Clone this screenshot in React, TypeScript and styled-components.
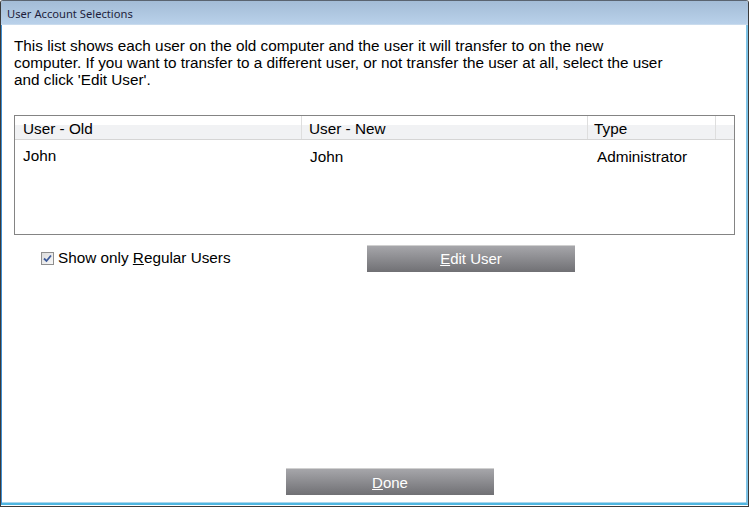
import React from "react";
import styled, { createGlobalStyle } from "styled-components";

const Global = createGlobalStyle`
  html, body { margin: 0; padding: 0; background: #ffffff; }
  * { box-sizing: border-box; }
`;

const Window = styled.div`
  width: 749px;
  height: 507px;
  display: flex;
  flex-direction: column;
  border: 1px solid #3a3a3a;
  border-top-color: #5a6470;
  border-radius: 3px 3px 0 0;
  background: #ffffff;
  overflow: hidden;
  font-family: "Liberation Sans", Arial, sans-serif;
`;

const TitleBar = styled.div`
  height: 24px;
  flex: none;
  display: flex;
  align-items: center;
  padding-left: 6px;
  padding-top: 2px;
  background: linear-gradient(#a3bcd6, #b9d1ea);
  border-bottom: 1px solid #c9dbed;
  font-family: "Noto Sans", "Open Sans", sans-serif;
  font-size: 11.2px;
  color: #1e1e3c;
`;

const Frame = styled.div`
  flex: 1;
  display: flex;
  flex-direction: column;
  border-left: 1px solid #3f8fd2;
  border-right: 2px solid #7ec3e6;
  border-bottom: 2px solid #4fb6e0;
  box-shadow: inset 0 -1px 0 #a9d6ee;
  margin-bottom: 1px;
`;

const Body = styled.div`
  flex: 1;
  display: flex;
  flex-direction: column;
  padding: 12px 11px 8px 12px;
`;

const Intro = styled.p`
  margin: 0;
  font-size: 15.3px;
  line-height: 17px;
  color: #000;
  width: 660px;
`;

const Table = styled.div`
  margin-top: 27px;
  height: 120px;
  border: 1px solid #848484;
  display: flex;
  flex-direction: column;
`;

const HeaderRow = styled.div`
  display: grid;
  grid-template-columns: 287px 286px 128px 1fr;
  height: 24px;
  background: linear-gradient(#ffffff 0%, #ffffff 40%, #f1f2f4 41%, #f1f2f4 100%);
  border-bottom: 1px solid #d5d5d5;
`;

const HeaderCell = styled.div<{ $dx?: number }>`
  display: flex;
  align-items: center;
  padding-left: ${(p) => 7 + (p.$dx ?? 0)}px;
  padding-top: 3px;
  font-size: 15.3px;
  color: #000;
  border-right: 1px solid #dedede;
  &:last-child { border-right: none; }
`;

const DataRow = styled.div`
  display: grid;
  grid-template-columns: 287px 286px 128px 1fr;
  height: 26px;
`;

const DataCell = styled.div<{ $dx?: number; $dy?: number }>`
  padding-left: ${(p) => 7 + (p.$dx ?? 0)}px;
  padding-top: ${(p) => 7 + (p.$dy ?? 0)}px;
  font-size: 15.3px;
  color: #000;
`;

const Controls = styled.div`
  display: flex;
  align-items: center;
  margin-top: 9px;
  height: 28px;
`;

const CheckLabel = styled.label`
  display: flex;
  align-items: center;
  gap: 4px;
  margin-left: 27px;
  width: 326px;
  font-size: 15.3px;
  color: #000;
  margin-top: 0;
`;

const CheckBox = styled.span`
  width: 13px;
  height: 13px;
  border: 1px solid #8f8f8f;
  background: linear-gradient(135deg, #dcdcdc, #f8f8f8);
  display: flex;
  align-items: center;
  justify-content: center;
`;

const Button = styled.button`
  width: 208px;
  height: 27px;
  border: none;
  border-top: 1px solid #d0d0d0;
  background: linear-gradient(#a6a6aa, #707074);
  color: #ffffff;
  font-family: "Liberation Sans", Arial, sans-serif;
  font-size: 15px;
  padding: 0;
  cursor: default;
`;

const Spacer = styled.div`
  flex: 1;
`;

const Footer = styled.div`
  display: flex;
  justify-content: center;
  padding-left: 31px;
`;

const U = styled.span`
  text-decoration: underline;
`;

export default function App() {
  return (
    <>
      <Global />
      <Window>
        <TitleBar>User Account Selections</TitleBar>
        <Frame>
          <Body>
            <Intro>
              This list shows each user on the old computer and the user it will transfer to on the new
              computer. If you want to transfer to a different user, or not transfer the user at all, select the user
              and click 'Edit User'.
            </Intro>
            <Table>
              <HeaderRow>
                <HeaderCell $dx={1}>User - Old</HeaderCell>
                <HeaderCell>User - New</HeaderCell>
                <HeaderCell $dx={-1}>Type</HeaderCell>
                <HeaderCell />
              </HeaderRow>
              <DataRow>
                <DataCell $dx={1}>John</DataCell>
                <DataCell $dx={1} $dy={1}>John</DataCell>
                <DataCell $dx={2} $dy={1}>Administrator</DataCell>
                <DataCell />
              </DataRow>
            </Table>
            <Controls>
              <CheckLabel>
                <CheckBox>
                  <svg width="9" height="9" viewBox="0 0 9 9">
                    <path d="M1 4.5 L3.5 7 L8 1.5" fill="none" stroke="#3c5a9a" strokeWidth="1.8" />
                  </svg>
                </CheckBox>
                <span>
                  Show only <U>R</U>egular Users
                </span>
              </CheckLabel>
              <Button>
                <U>E</U>dit User
              </Button>
            </Controls>
            <Spacer />
            <Footer>
              <Button>
                <U>D</U>one
              </Button>
            </Footer>
          </Body>
        </Frame>
      </Window>
    </>
  );
}
